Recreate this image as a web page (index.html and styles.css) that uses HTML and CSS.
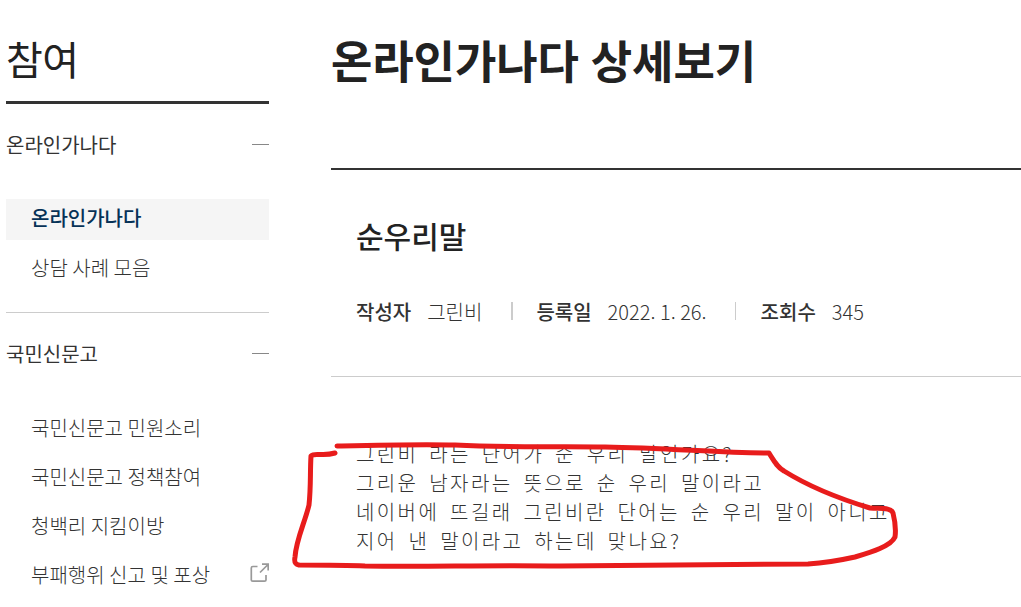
FILE: index.html
```html
<!DOCTYPE html>
<html lang="ko">
<head>
    <meta charset="UTF-8">
    <meta name="viewport" content="width=device-width, initial-scale=1.0">
    <title>온라인가나다 상세보기</title>
    <link rel="stylesheet" href="styles.css">
</head>
<body>
    <div class="container">
        <aside class="sidebar">
            <h2>참여</h2>
            <nav>
                <div class="menu-group">
                    <a class="menu-title" href="#">온라인가나다 <span class="minus"></span></a>
                    <ul class="submenu">
                        <li class="active"><a href="#">온라인가나다</a></li>
                        <li><a href="#">상담 사례 모음</a></li>
                    </ul>
                </div>
                <div class="menu-group">
                    <a class="menu-title" href="#">국민신문고 <span class="minus"></span></a>
                    <ul class="submenu">
                        <li><a href="#">국민신문고 민원소리</a></li>
                        <li><a href="#">국민신문고 정책참여</a></li>
                        <li><a href="#">청백리 지킴이방</a></li>
                        <li>
                            <a href="#">부패행위 신고 및 포상</a>
                            <svg class="external" width="20" height="20" viewBox="0 0 20 20">
                                <path d="M8.5 3.5H3.8Q2.3 3.5 2.3 5V17Q2.3 18.2 3.8 18.2H15.5Q17 18.2 17 17V12"/>
                                <path d="M11 9.5L19 1.5M13 1.2H19.2V7.5"/>
                            </svg>
                        </li>
                    </ul>
                </div>
            </nav>
        </aside>
        <main class="content">
            <h1>온라인가나다 상세보기</h1>
            <article class="post">
                <header class="post-header">
                    <h3>순우리말</h3>
                    <dl class="meta">
                        <div><dt>작성자</dt><dd>그린비</dd></div>
                        <div><dt>등록일</dt><dd>2022. 1. 26.</dd></div>
                        <div><dt>조회수</dt><dd>345</dd></div>
                    </dl>
                </header>
                <div class="post-body">
                    <p>그린비 라는 단어가 순 우리 말인가요?</p>
                    <p>그리운 남자라는 뜻으로 순 우리 말이라고</p>
                    <p>네이버에 뜨길래 그린비란 단어는 순 우리 말이 아니고</p>
                    <p>지어 낸 말이라고 하는데 맞나요?</p>
                    <svg class="marker" width="620" height="140" viewBox="285 435 620 140">
                        <path d="M337 446C380 445 420 444 455 445C510 448 560 446 605 447C670 448 720 453 769 453C774 461 777 467 784 471C808 486 837 498 870 508C880 509 891 507 893 513C895 521 896 530 895 537C891 546 872 552 855 557C837 561 823 563 808 564C720 564 640 565 560 566C480 565 430 567 365 566C345 565 320 565 299 565C295 564 294 562 295 557C296 540 305 522 309 505C311 487 310 472 311 456C315 452 322 457 335 453"/>
                    </svg>
                </div>
            </article>
        </main>
    </div>
</body>
</html>
```

FILE: styles.css
```css
* {
    box-sizing: border-box;
    margin: 0;
    padding: 0;
}
body {
    font-family: "Noto Sans CJK KR", sans-serif;
    font-size: 20px;
    font-weight: 300;
    word-spacing: -1.1px;
    color: #333;
    background-color: #fff;
    height: 607px;
    overflow: hidden;
}
a {
    color: inherit;
    text-decoration: none;
}
ul {
    list-style: none;
}
.container {
    display: flex;
    gap: 62px;
    padding-left: 6px;
}
.sidebar {
    width: 263px;
    flex-shrink: 0;
}
.sidebar h2 {
    height: 104px;
    padding-top: 28px;
    border-bottom: 3px solid #333;
    font-size: 40px;
    font-weight: 400;
    line-height: 60px;
    letter-spacing: -0.5px;
    color: #222;
}
.menu-group {
    border-bottom: 1px solid #ccc;
    padding-bottom: 23px;
}
.menu-title {
    display: flex;
    justify-content: space-between;
    align-items: center;
    height: 82px;
    padding-bottom: 1px;
    font-weight: 400;
}
.minus {
    width: 17px;
    height: 1px;
    background-color: #888;
}
.submenu {
    display: flex;
    flex-direction: column;
    gap: 8.3px;
    padding-top: 13px;
}
.submenu li {
    display: flex;
    justify-content: space-between;
    align-items: center;
    height: 41px;
    padding: 0 0 3.6px 25px;
}
.submenu .active {
    background-color: #f5f5f5;
    color: #063257;
    font-weight: 500;
}
.external {
    margin-bottom: 4px;
    fill: none;
    stroke: #999;
    stroke-width: 1.7;
}
.content {
    flex: 1;
}
h1 {
    height: 168px;
    padding-top: 27px;
    font-size: 45px;
    font-weight: 700;
    line-height: 66px;
    letter-spacing: -0.1px;
    word-spacing: -0.5px;
    color: #222;
}
.post {
    border-top: 2px solid #333;
}
.post-header {
    height: 207px;
    padding: 43px 25px 0;
    border-bottom: 1px solid #ccc;
}
.post-header h3 {
    font-size: 30px;
    font-weight: 500;
    line-height: 44px;
    color: #222;
}
.meta {
    display: flex;
    margin-top: 40px;
    line-height: 30px;
}
.meta div {
    display: flex;
    align-items: center;
    gap: 16px;
}
.meta div + div::before {
    content: "";
    width: 1px;
    height: 18px;
    margin: 0 9px 2px 28px;
    background-color: #ccc;
}
.meta div:nth-child(2)::before {
    width: 2px;
    margin-left: 29px;
    margin-right: 7px;
}
.meta dt {
    font-weight: 500;
}
.post-body {
    position: relative;
    padding: 62px 25px 0;
    line-height: 29px;
    letter-spacing: 2.4px;
    word-spacing: 2.9px;
    white-space: nowrap;
}
.marker {
    position: absolute;
    left: -46px;
    top: 58px;
    fill: none;
    stroke: #e81c1c;
    stroke-width: 5;
    stroke-linecap: round;
    stroke-linejoin: round;
}
```
